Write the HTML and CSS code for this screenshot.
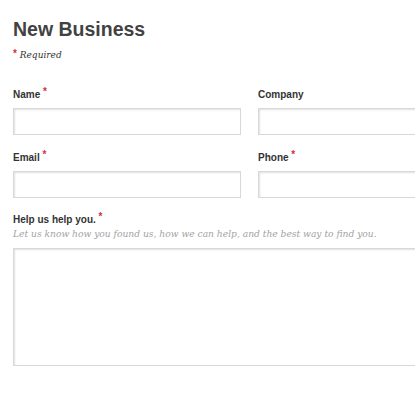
FILE: index.html
```html
<!DOCTYPE html>
<html>
<head>
<meta charset="utf-8">
<link rel="stylesheet" href="styles.css">
</head>
<body>
<div class="page">
  <h1 class="title">New Business</h1>
  <p class="required-note"><span class="star star-note">*</span> Required</p>
  <div class="grid">
    <div class="field">
      <label class="label">Name <span class="star">*</span></label>
      <div class="input"></div>
    </div>
    <div class="field">
      <label class="label">Company</label>
      <div class="input"></div>
    </div>
    <div class="field">
      <label class="label">Email <span class="star">*</span></label>
      <div class="input"></div>
    </div>
    <div class="field">
      <label class="label">Phone <span class="star">*</span></label>
      <div class="input"></div>
    </div>
  </div>
  <div class="field wide">
    <label class="label">Help us help you. <span class="star">*</span></label>
    <p class="hint">Let us know how you found us, how we can help, and the best way to find you.</p>
    <div class="textarea"></div>
  </div>
</div>
</body>
</html>
```

FILE: styles.css
```css
html, body {
  margin: 0;
  padding: 0;
  background: #fff;
  overflow: hidden;
}
.page {
  width: 700px;
  padding: 16px 0 0 13px;
  font-family: "Liberation Sans", Arial, sans-serif;
  color: #444;
}
.title {
  margin: 0;
  font-size: 19.5px;
  line-height: 26px;
  font-weight: bold;
  color: #424242;
}
.required-note {
  margin: 7px 0 0 0;
  font-family: "DejaVu Serif", Georgia, serif;
  font-style: italic;
  font-size: 9px;
  line-height: 12px;
  color: #333;
}
.star {
  color: #d0303a;
  font-style: normal;
  font-family: "Liberation Sans", Arial, sans-serif;
  font-weight: bold;
  position: relative;
  top: -3px;
  font-size: 10px;
}
.star-note {
  top: -1px;
}
.grid {
  display: grid;
  grid-template-columns: 228px 228px;
  column-gap: 17px;
  row-gap: 16px;
  margin-top: 27px;
  width: 473px;
}
.field {
  display: flex;
  flex-direction: column;
}
.label {
  font-size: 10px;
  font-weight: bold;
  line-height: 14px;
  color: #333;
  margin-bottom: 6px;
}
.input {
  height: 25px;
  border: 1px solid #d8d8d8;
  box-shadow: inset 1px 1px 2px rgba(0,0,0,0.12);
  background: #fff;
}
.wide {
  margin-top: 15px;
}
.wide .label {
  margin-bottom: 1px;
}
.hint {
  margin: 0 0 7px 0;
  font-family: "DejaVu Serif", Georgia, serif;
  font-style: italic;
  font-size: 9.15px;
  line-height: 13px;
  color: #a2a2a2;
}
.textarea {
  width: 600px;
  height: 116px;
  border: 1px solid #d8d8d8;
  box-shadow: inset 1px 1px 2px rgba(0,0,0,0.12);
  background: #fff;
}
```
